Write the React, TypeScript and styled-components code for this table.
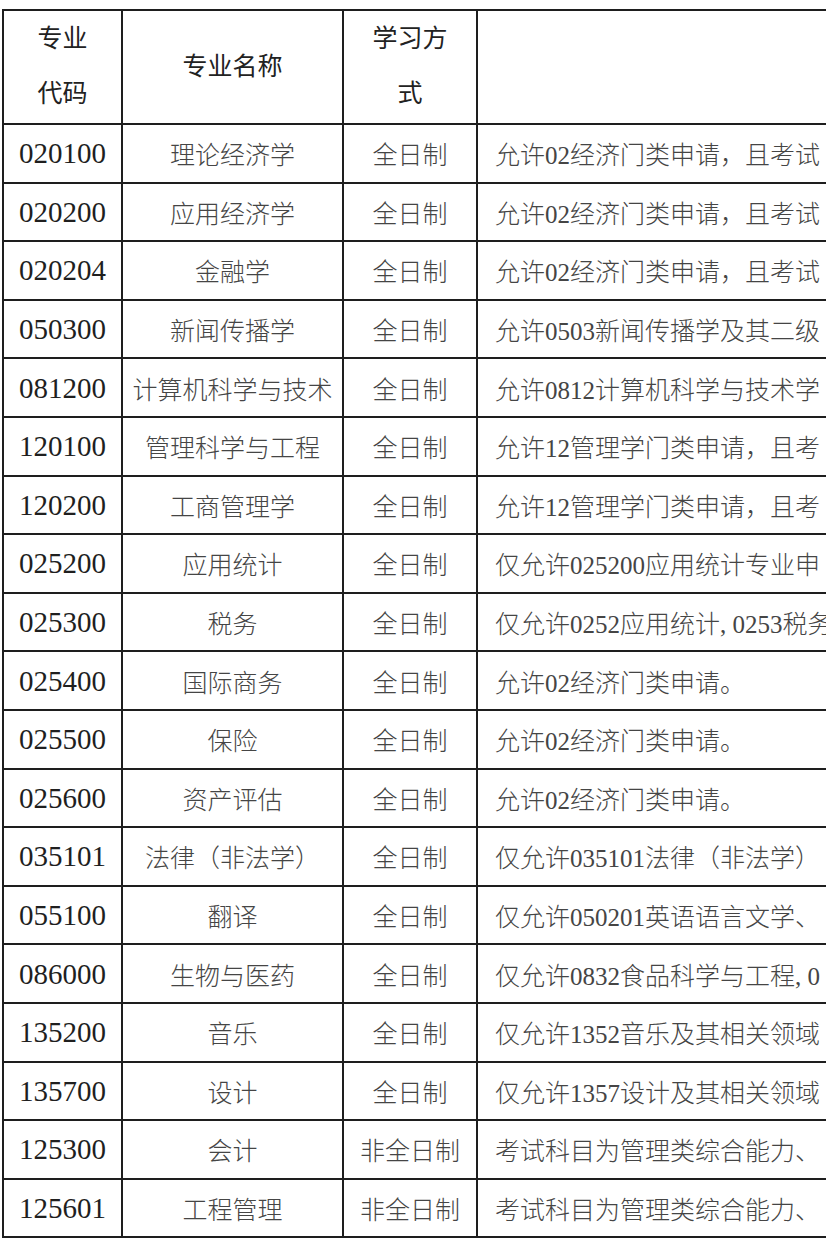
import React from "react";
import styled, { createGlobalStyle } from "styled-components";

const GlobalStyle = createGlobalStyle`
  html, body {
    margin: 0;
    padding: 0;
    background: #ffffff;
    overflow: hidden;
  }
  body {
    font-family: "Liberation Serif", "Noto Sans CJK SC", serif;
  }
`;

const Page = styled.div`
  width: 826px;
  height: 1239px;
  padding: 9px 0 0 2px;
  box-sizing: border-box;
  overflow: hidden;
`;

const Table = styled.div`
  display: grid;
  grid-template-columns: 117px 219px 132px 640px;
  grid-template-rows: 112px repeat(19, 56.6px);
  gap: 2px;
  padding: 2px;
  background: #1e1e1e;
  width: max-content;
`;

const Cell = styled.div<{ $align?: "left" | "center" }>`
  background: #ffffff;
  display: flex;
  align-items: center;
  justify-content: ${(p) => (p.$align === "left" ? "flex-start" : "center")};
  padding: ${(p) => (p.$align === "left" ? "0 0 0 17px" : "0")};
  font-size: 25px;
  font-weight: 300;
  color: #454545;
  white-space: nowrap;
  overflow: hidden;
`;

const HeadCell = styled(Cell)`
  color: #222222;
  font-weight: 400;
  text-align: center;
  line-height: 55px;
  padding-bottom: 2px;
`;

const CodeCell = styled(Cell)`
  font-size: 29px;
  font-weight: 400;
  color: #1f1f1f;
  padding-top: 1px;
`;

interface IMajor {
  code: string;
  name: string;
  mode: string;
  note: string;
}

const majors: IMajor[] = [
  { code: "020100", name: "理论经济学", mode: "全日制", note: "允许02经济门类申请，且考试" },
  { code: "020200", name: "应用经济学", mode: "全日制", note: "允许02经济门类申请，且考试" },
  { code: "020204", name: "金融学", mode: "全日制", note: "允许02经济门类申请，且考试" },
  { code: "050300", name: "新闻传播学", mode: "全日制", note: "允许0503新闻传播学及其二级" },
  { code: "081200", name: "计算机科学与技术", mode: "全日制", note: "允许0812计算机科学与技术学" },
  { code: "120100", name: "管理科学与工程", mode: "全日制", note: "允许12管理学门类申请，且考" },
  { code: "120200", name: "工商管理学", mode: "全日制", note: "允许12管理学门类申请，且考" },
  { code: "025200", name: "应用统计", mode: "全日制", note: "仅允许025200应用统计专业申" },
  { code: "025300", name: "税务", mode: "全日制", note: "仅允许0252应用统计, 0253税务" },
  { code: "025400", name: "国际商务", mode: "全日制", note: "允许02经济门类申请。" },
  { code: "025500", name: "保险", mode: "全日制", note: "允许02经济门类申请。" },
  { code: "025600", name: "资产评估", mode: "全日制", note: "允许02经济门类申请。" },
  { code: "035101", name: "法律（非法学）", mode: "全日制", note: "仅允许035101法律（非法学）" },
  { code: "055100", name: "翻译", mode: "全日制", note: "仅允许050201英语语言文学、" },
  { code: "086000", name: "生物与医药", mode: "全日制", note: "仅允许0832食品科学与工程, 0" },
  { code: "135200", name: "音乐", mode: "全日制", note: "仅允许1352音乐及其相关领域" },
  { code: "135700", name: "设计", mode: "全日制", note: "仅允许1357设计及其相关领域" },
  { code: "125300", name: "会计", mode: "非全日制", note: "考试科目为管理类综合能力、" },
  { code: "125601", name: "工程管理", mode: "非全日制", note: "考试科目为管理类综合能力、" },
];

function App() {
  return (
    <Page>
      <GlobalStyle />
      <Table>
        <HeadCell>
          专业
          <br />
          代码
        </HeadCell>
        <HeadCell>专业名称</HeadCell>
        <HeadCell>
          学习方
          <br />
          式
        </HeadCell>
        <HeadCell />
        {majors.map((m) => (
          <React.Fragment key={m.code}>
            <CodeCell>{m.code}</CodeCell>
            <Cell>{m.name}</Cell>
            <Cell>{m.mode}</Cell>
            <Cell $align="left">{m.note}</Cell>
          </React.Fragment>
        ))}
      </Table>
    </Page>
  );
}

export default App;
